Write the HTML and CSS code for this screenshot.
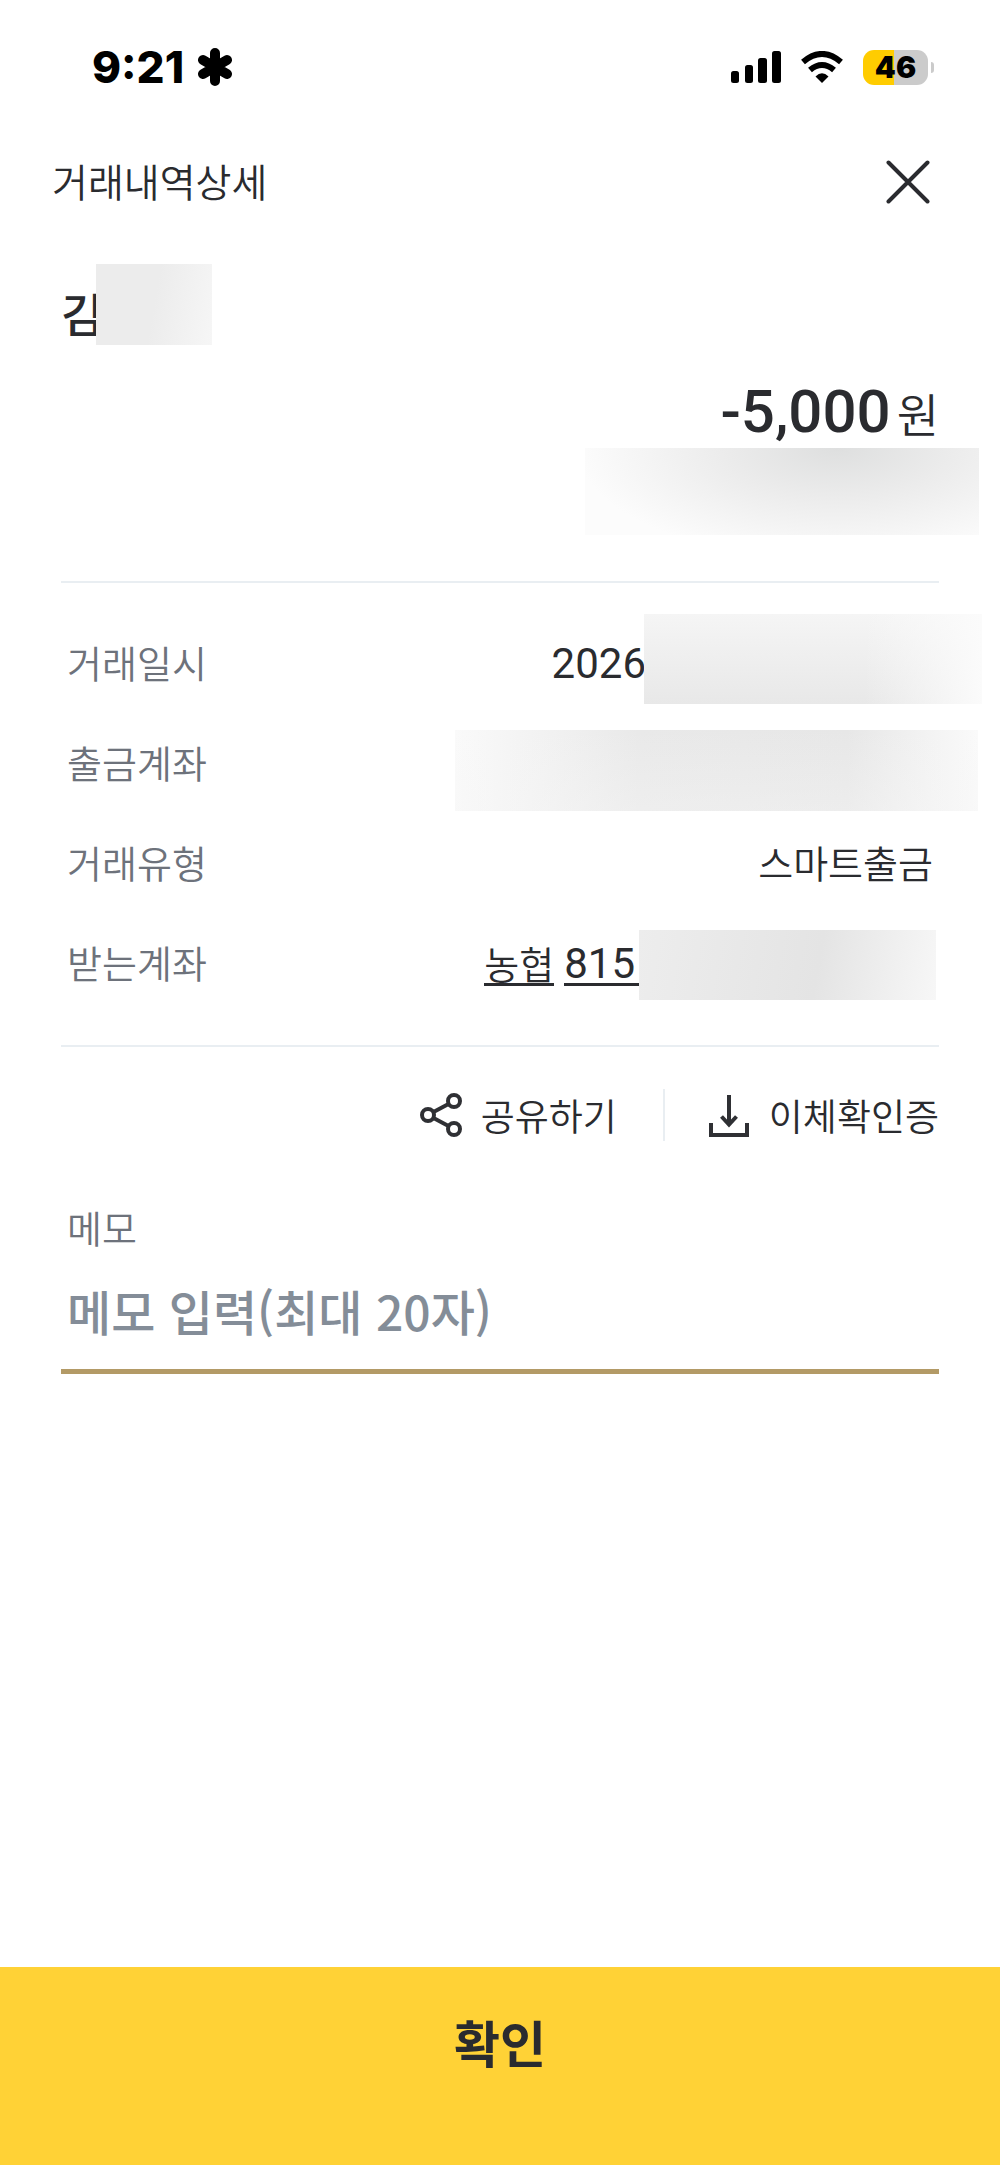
FILE: index.html
```html
<!DOCTYPE html>
<html lang="ko">
<head>
    <meta charset="UTF-8">
    <meta name="viewport" content="width=device-width, initial-scale=1.0">
    <title>거래내역상세</title>
    <link rel="stylesheet" href="styles.css">
</head>
<body>
    <div class="status-bar">
        <div class="status-left">
            <span class="time">9:21</span>
            <svg width="36" height="38" viewBox="0 0 36 38" stroke="#000" stroke-width="10" stroke-linecap="round">
                <path d="M18 5v28M6 12l24 14M30 12L6 26"/>
            </svg>
        </div>
        <div class="status-right">
            <svg width="50" height="32" viewBox="0 0 50 32">
                <rect x="0" y="20" width="8" height="12" rx="2.5"/>
                <rect x="14" y="14" width="8" height="18" rx="2.5"/>
                <rect x="27" y="7" width="9" height="25" rx="2.5"/>
                <rect x="41" y="0" width="9" height="32" rx="2.5"/>
            </svg>
            <svg width="44" height="32" viewBox="0 0 44 32">
                <path d="M3 11Q22-5 41 11" fill="none" stroke="#000" stroke-width="6"/>
                <path d="M10 19Q22 9 34 19" fill="none" stroke="#000" stroke-width="6"/>
                <path d="M15.500 25.500Q22 19 28.500 25.500L22 32Z"/>
            </svg>
            <div class="battery">46</div>
        </div>
    </div>

    <header>
        <h1>거래내역상세</h1>
        <button class="close-btn" aria-label="닫기">
            <svg width="44" height="44" viewBox="0 0 44 44" fill="none" stroke="#2a2b2f" stroke-width="4" stroke-linecap="round">
                <path d="M2.500 2.500l39 39M41.500 2.500l-39 39"/>
            </svg>
        </button>
    </header>

    <main>
        <section class="summary">
            <div class="name"><span>김</span><span class="mask mask-name"></span></div>
            <p class="amount"><strong>-5,000</strong><span>원</span></p>
            <div class="mask mask-balance"></div>
        </section>

        <dl class="details">
            <div class="row">
                <dt>거래일시</dt>
                <dd><span class="number">2026</span><span class="mask mask-date"></span></dd>
            </div>
            <div class="row">
                <dt>출금계좌</dt>
                <dd><span class="mask mask-from"></span></dd>
            </div>
            <div class="row">
                <dt>거래유형</dt>
                <dd>스마트출금</dd>
            </div>
            <div class="row">
                <dt>받는계좌</dt>
                <dd><a href="#"><span>농협</span><span class="number">815</span></a><span class="mask mask-to"></span></dd>
            </div>
        </dl>

        <div class="actions">
            <button>
                <svg width="42" height="46" viewBox="0 0 42 46" fill="none" stroke="#2f3034" stroke-width="4">
                    <circle cx="8" cy="23" r="6"/>
                    <circle cx="34" cy="9" r="6"/>
                    <circle cx="34" cy="37" r="6"/>
                    <path d="M13.500 20L28.500 12M13.500 26l15 8"/>
                </svg>
                공유하기
            </button>
            <button>
                <svg width="42" height="44" viewBox="0 0 42 44" fill="none" stroke="#2f3034" stroke-width="4">
                    <path d="M21 2v30M13.500 23.500l7.500 8 7.500-8M3 30v12h36V30"/>
                </svg>
                이체확인증
            </button>
        </div>

        <div class="memo">
            <label for="memo">메모</label>
            <input type="text" id="memo" maxlength="20" placeholder="메모 입력(최대 20자)">
        </div>
    </main>

    <button class="confirm-btn">확인</button>
</body>
</html>
```

FILE: styles.css
```css
* {
    box-sizing: border-box;
}
body {
    font-family: "Noto Sans CJK KR", sans-serif;
    font-weight: 350;
    margin: 0;
    min-height: 100vh;
    display: flex;
    flex-direction: column;
    background-color: #fff;
    color: #2a2b2f;
}
button {
    font: inherit;
    color: inherit;
    background: none;
    border: none;
    padding: 0;
    cursor: pointer;
}
svg {
    display: block;
    flex-shrink: 0;
}

/* status bar */
.status-bar {
    display: flex;
    align-items: center;
    justify-content: space-between;
    height: 134px;
    padding: 0 72px 0 92px;
    font-family: Inter, sans-serif;
    color: #000;
}
.status-left {
    display: flex;
    align-items: center;
    gap: 13px;
}
.time {
    font-size: 44px;
    font-weight: 800;
    line-height: 48px;
}
.status-right {
    display: flex;
    align-items: center;
    gap: 19px;
}
.battery {
    position: relative;
    width: 65px;
    height: 35px;
    border-radius: 11px;
    background: linear-gradient(to right, #ffcc00 47%, #cbcbcb 47%);
    font-size: 30px;
    font-weight: 900;
    line-height: 35px;
    text-align: center;
}
.battery::after {
    content: "";
    position: absolute;
    top: 12px;
    right: -6px;
    width: 3px;
    height: 11px;
    border-radius: 0 3px 3px 0;
    background-color: #cbcbcb;
}

/* header */
header {
    display: flex;
    align-items: center;
    justify-content: space-between;
    height: 96px;
    padding: 0 70px 0 52px;
}
h1 {
    margin: 0;
    padding-bottom: 4px;
    font-size: 39px;
    font-weight: 350;
    line-height: 56px;
}

main {
    padding: 0 61px;
}

/* blurred private data */
.mask {
    flex-shrink: 0;
    background-color: #ededed;
}
.mask-name {
    width: 116px;
    height: 81px;
    margin-left: -7px;
    background: linear-gradient(100deg, #ececec 50%, #f6f6f6);
}
.mask-balance {
    width: 394px;
    height: 87px;
    margin: 0 -40px 0 auto;
    background: radial-gradient(ellipse 66% 130% at 64% 0, #dedfdf, #ececec 45%, #fcfcfc);
}
.mask-date {
    align-self: flex-start;
    width: 338px;
    height: 90px;
    margin: 0 -43px 0 -2px;
    background: linear-gradient(to right, transparent 65%, #fbfbfb), linear-gradient(#f5f5f5, #e8e8e8);
}
.mask-from {
    align-self: flex-start;
    width: 523px;
    height: 81px;
    margin: 16px -39px 0 0;
    background: linear-gradient(transparent, #f6f6f666), linear-gradient(to right, #fafafa, #e9e9e9 35%, #e7e7e7 75%, #fafafa);
}
.mask-to {
    align-self: flex-start;
    width: 297px;
    height: 70px;
    margin: 16px 3px 0 0;
    background: linear-gradient(100deg, #ededed, #e4e4e4 60%, #f7f7f7);
}

/* name and amount */
.summary {
    padding: 34px 0 46px;
}
.name {
    display: flex;
    align-items: center;
    height: 81px;
    font-size: 46px;
    font-weight: 500;
    line-height: 1;
}
.name span:first-child {
    padding-top: 14px;
}
.amount {
    display: flex;
    align-items: baseline;
    justify-content: flex-end;
    gap: 6px;
    margin: 0;
    padding-top: 31px;
    line-height: 72px;
}
.amount strong {
    font-family: Roboto, sans-serif;
    font-size: 60px;
    font-weight: 500;
}
.amount span {
    font-size: 46px;
}

/* detail list */
.details {
    margin: 0;
    padding: 31px 0;
    border-top: 2px solid #e9eef2;
    border-bottom: 2px solid #e9eef2;
    font-size: 38px;
}
.row {
    display: flex;
    justify-content: space-between;
    height: 100px;
    line-height: 96px;
}
dt {
    padding-left: 6px;
    color: #6d727b;
}
dd {
    display: flex;
    margin: 0;
    padding-right: 6px;
}
.row dd:has(.mask) {
    padding-right: 0;
}
.number {
    font-family: Roboto, sans-serif;
    font-size: 42px;
    font-weight: 400;
    line-height: 100px;
}
.details a {
    display: flex;
    align-items: center;
    gap: 10px;
    color: inherit;
    line-height: 42px;
    text-decoration: none;
}
.details a span {
    height: 44px;
    border-bottom: 3px solid #2a2b2f;
}
.details a .number {
    padding-right: 4px;
    line-height: 44px;
}

/* share / certificate */
.actions {
    display: flex;
    justify-content: flex-end;
    padding-top: 42px;
}
.actions button {
    display: flex;
    align-items: center;
    gap: 19px;
    height: 52px;
    font-size: 37px;
    line-height: 48px;
}
.actions button + button {
    margin-left: 46px;
    padding-left: 43px;
    border-left: 2px solid #e9eef2;
}

/* memo */
.memo {
    display: flex;
    flex-direction: column;
    padding-top: 58px;
}
.memo label {
    padding-left: 6px;
    font-size: 38px;
    line-height: 56px;
    color: #6d727b;
}
.memo input {
    width: 100%;
    height: 119px;
    padding: 0 6px 4px;
    border: none;
    border-bottom: 5px solid #b39a66;
    outline: none;
    font-family: inherit;
    font-size: 48px;
    font-weight: 500;
    color: #2a2b2f;
}
.memo input::placeholder {
    color: #848d98;
    opacity: 1;
}

/* bottom button */
.confirm-btn {
    margin-top: auto;
    height: 198px;
    padding-bottom: 50px;
    background-color: #ffd236;
    font-size: 50px;
    font-weight: 700;
}
```
